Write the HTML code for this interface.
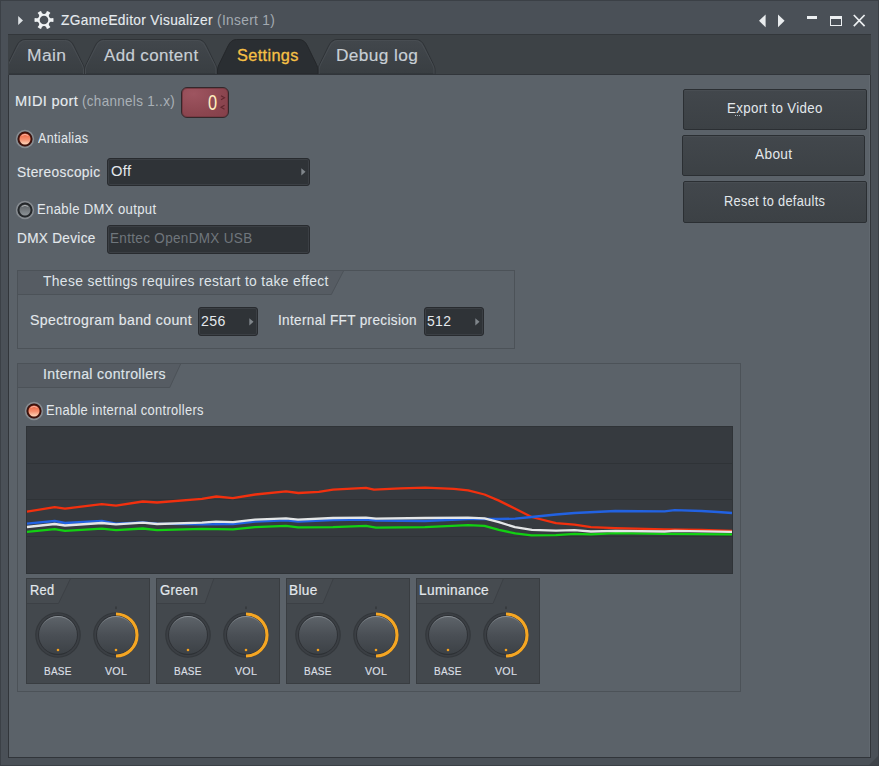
<!DOCTYPE html><html><head><meta charset="utf-8"><style>
html,body{margin:0;padding:0;width:879px;height:766px;overflow:hidden;background:#4a5057;}
.b{position:absolute;}
.t{position:absolute;white-space:nowrap;line-height:1;font-family:"Liberation Sans",sans-serif;transform-origin:0 0;}
svg{overflow:visible}
</style></head><body>
<div class="b" style="left:0px;top:0px;width:879px;height:766px;background:#4a5057;"></div>
<div class="b" style="left:0px;top:0px;width:879px;height:1px;background:#3b4046;"></div>
<div class="b" style="left:0px;top:0px;width:1px;height:766px;background:#3b4046;"></div>
<div class="b" style="left:878px;top:0px;width:1px;height:766px;background:#3b4046;"></div>
<div class="b" style="left:0px;top:765px;width:879px;height:1px;background:#3b4046;"></div>
<svg class="b" style="left:869px;top:756px" width="9" height="9"><path d="M9 0 L9 9 L0 9 Z" fill="#3f444a"/></svg>
<svg class="b" style="left:17px;top:15px" width="8" height="11"><path d="M1.2 1 L6 5.5 L1.2 10 Z" fill="#dde1e4"/></svg>
<svg class="b" style="left:33.6px;top:10.4px" width="20" height="20" viewBox="-10 -10 20 20"><path d="M9.50 0.00 L9.50 0.17 L9.49 0.33 L9.49 0.50 L9.48 0.66 L9.46 0.83 L9.45 0.99 L9.43 1.16 L9.41 1.32 L9.38 1.49 L9.36 1.65 L9.33 1.81 L9.29 1.98 L7.37 1.70 L6.98 1.74 L6.73 1.80 L6.52 1.87 L6.35 1.94 L6.21 2.02 L6.08 2.09 L5.96 2.17 L5.85 2.25 L5.76 2.33 L5.67 2.41 L5.58 2.49 L5.51 2.57 L5.44 2.65 L5.37 2.74 L5.31 2.82 L5.25 2.91 L5.20 3.00 L5.15 3.09 L5.10 3.19 L5.06 3.28 L5.02 3.38 L4.98 3.49 L4.95 3.59 L4.92 3.71 L4.89 3.82 L4.87 3.95 L4.86 4.08 L4.85 4.22 L4.85 4.37 L4.86 4.53 L4.88 4.71 L4.92 4.92 L5.00 5.18 L5.16 5.53 L6.36 7.06 L6.23 7.17 L6.11 7.28 L5.98 7.38 L5.85 7.49 L5.72 7.59 L5.58 7.69 L5.45 7.78 L5.31 7.88 L5.17 7.97 L5.03 8.06 L4.89 8.14 L4.75 8.23 L4.61 8.31 L4.46 8.39 L4.31 8.46 L4.16 8.54 L4.01 8.61 L3.86 8.68 L3.71 8.74 L3.56 8.81 L3.40 8.87 L3.25 8.93 L3.09 8.98 L2.94 9.04 L2.21 7.23 L1.98 6.92 L1.80 6.73 L1.64 6.58 L1.49 6.47 L1.36 6.38 L1.23 6.31 L1.10 6.24 L0.98 6.19 L0.86 6.15 L0.75 6.11 L0.64 6.08 L0.53 6.05 L0.42 6.03 L0.32 6.02 L0.21 6.01 L0.10 6.00 L0.00 6.00 L-0.10 6.00 L-0.21 6.01 L-0.32 6.02 L-0.42 6.03 L-0.53 6.05 L-0.64 6.08 L-0.75 6.11 L-0.86 6.15 L-0.98 6.19 L-1.10 6.24 L-1.23 6.31 L-1.36 6.38 L-1.49 6.47 L-1.64 6.58 L-1.80 6.73 L-1.98 6.92 L-2.21 7.23 L-2.94 9.04 L-3.09 8.98 L-3.25 8.93 L-3.40 8.87 L-3.56 8.81 L-3.71 8.74 L-3.86 8.68 L-4.01 8.61 L-4.16 8.54 L-4.31 8.46 L-4.46 8.39 L-4.61 8.31 L-4.75 8.23 L-4.89 8.14 L-5.03 8.06 L-5.17 7.97 L-5.31 7.88 L-5.45 7.78 L-5.58 7.69 L-5.72 7.59 L-5.85 7.49 L-5.98 7.38 L-6.11 7.28 L-6.23 7.17 L-6.36 7.06 L-5.16 5.53 L-5.00 5.18 L-4.92 4.92 L-4.88 4.71 L-4.86 4.53 L-4.85 4.37 L-4.85 4.22 L-4.86 4.08 L-4.87 3.95 L-4.89 3.82 L-4.92 3.71 L-4.95 3.59 L-4.98 3.49 L-5.02 3.38 L-5.06 3.28 L-5.10 3.19 L-5.15 3.09 L-5.20 3.00 L-5.25 2.91 L-5.31 2.82 L-5.37 2.74 L-5.44 2.65 L-5.51 2.57 L-5.58 2.49 L-5.67 2.41 L-5.76 2.33 L-5.85 2.25 L-5.96 2.17 L-6.08 2.09 L-6.21 2.02 L-6.35 1.94 L-6.52 1.87 L-6.73 1.80 L-6.98 1.74 L-7.37 1.70 L-9.29 1.98 L-9.33 1.81 L-9.36 1.65 L-9.38 1.49 L-9.41 1.32 L-9.43 1.16 L-9.45 0.99 L-9.46 0.83 L-9.48 0.66 L-9.49 0.50 L-9.49 0.33 L-9.50 0.17 L-9.50 0.00 L-9.50 -0.17 L-9.49 -0.33 L-9.49 -0.50 L-9.48 -0.66 L-9.46 -0.83 L-9.45 -0.99 L-9.43 -1.16 L-9.41 -1.32 L-9.38 -1.49 L-9.36 -1.65 L-9.33 -1.81 L-9.29 -1.98 L-7.37 -1.70 L-6.98 -1.74 L-6.73 -1.80 L-6.52 -1.87 L-6.35 -1.94 L-6.21 -2.02 L-6.08 -2.09 L-5.96 -2.17 L-5.85 -2.25 L-5.76 -2.33 L-5.67 -2.41 L-5.58 -2.49 L-5.51 -2.57 L-5.44 -2.65 L-5.37 -2.74 L-5.31 -2.82 L-5.25 -2.91 L-5.20 -3.00 L-5.15 -3.09 L-5.10 -3.19 L-5.06 -3.28 L-5.02 -3.38 L-4.98 -3.49 L-4.95 -3.59 L-4.92 -3.71 L-4.89 -3.82 L-4.87 -3.95 L-4.86 -4.08 L-4.85 -4.22 L-4.85 -4.37 L-4.86 -4.53 L-4.88 -4.71 L-4.92 -4.92 L-5.00 -5.18 L-5.16 -5.53 L-6.36 -7.06 L-6.23 -7.17 L-6.11 -7.28 L-5.98 -7.38 L-5.85 -7.49 L-5.72 -7.59 L-5.58 -7.69 L-5.45 -7.78 L-5.31 -7.88 L-5.17 -7.97 L-5.03 -8.06 L-4.89 -8.14 L-4.75 -8.23 L-4.61 -8.31 L-4.46 -8.39 L-4.31 -8.46 L-4.16 -8.54 L-4.01 -8.61 L-3.86 -8.68 L-3.71 -8.74 L-3.56 -8.81 L-3.40 -8.87 L-3.25 -8.93 L-3.09 -8.98 L-2.94 -9.04 L-2.21 -7.23 L-1.98 -6.92 L-1.80 -6.73 L-1.64 -6.58 L-1.49 -6.47 L-1.36 -6.38 L-1.23 -6.31 L-1.10 -6.24 L-0.98 -6.19 L-0.86 -6.15 L-0.75 -6.11 L-0.64 -6.08 L-0.53 -6.05 L-0.42 -6.03 L-0.32 -6.02 L-0.21 -6.01 L-0.10 -6.00 L-0.00 -6.00 L0.10 -6.00 L0.21 -6.01 L0.32 -6.02 L0.42 -6.03 L0.53 -6.05 L0.64 -6.08 L0.75 -6.11 L0.86 -6.15 L0.98 -6.19 L1.10 -6.24 L1.23 -6.31 L1.36 -6.38 L1.49 -6.47 L1.64 -6.58 L1.80 -6.73 L1.98 -6.92 L2.21 -7.23 L2.94 -9.04 L3.09 -8.98 L3.25 -8.93 L3.40 -8.87 L3.56 -8.81 L3.71 -8.74 L3.86 -8.68 L4.01 -8.61 L4.16 -8.54 L4.31 -8.46 L4.46 -8.39 L4.61 -8.31 L4.75 -8.23 L4.89 -8.14 L5.03 -8.06 L5.17 -7.97 L5.31 -7.88 L5.45 -7.78 L5.58 -7.69 L5.72 -7.59 L5.85 -7.49 L5.98 -7.38 L6.11 -7.28 L6.23 -7.17 L6.36 -7.06 L5.16 -5.53 L5.00 -5.18 L4.92 -4.92 L4.88 -4.71 L4.86 -4.53 L4.85 -4.37 L4.85 -4.22 L4.86 -4.08 L4.87 -3.95 L4.89 -3.82 L4.92 -3.71 L4.95 -3.59 L4.98 -3.49 L5.02 -3.38 L5.06 -3.28 L5.10 -3.19 L5.15 -3.09 L5.20 -3.00 L5.25 -2.91 L5.31 -2.82 L5.37 -2.74 L5.44 -2.65 L5.51 -2.57 L5.58 -2.49 L5.67 -2.41 L5.76 -2.33 L5.85 -2.25 L5.96 -2.17 L6.08 -2.09 L6.21 -2.02 L6.35 -1.94 L6.52 -1.87 L6.73 -1.80 L6.98 -1.74 L7.37 -1.70 L9.29 -1.98 L9.33 -1.81 L9.36 -1.65 L9.38 -1.49 L9.41 -1.32 L9.43 -1.16 L9.45 -0.99 L9.46 -0.83 L9.48 -0.66 L9.49 -0.50 L9.49 -0.33 L9.50 -0.17 Z M4.3 0 A4.3 4.3 0 1 0 -4.3 0 A4.3 4.3 0 1 0 4.3 0 Z" fill="#eef1f3" fill-rule="evenodd"/></svg>
<div class="t" style="left:60.80px;top:12.56px;font-size:14.5px;color:#e6ebef;-webkit-text-stroke:0.12px #e6ebef;letter-spacing:0.35px;transform:scaleX(0.9458);">ZGameEditor Visualizer <span style="color:#a3aab1;-webkit-text-stroke:0">(Insert 1)</span></div>
<svg class="b" style="left:758px;top:14px" width="9" height="14"><path d="M7.6 0.5 L1 6.8 L7.6 13.2 Z" fill="#e9ecee"/></svg>
<svg class="b" style="left:777px;top:14px" width="9" height="14"><path d="M1 0.5 L7.6 6.8 L1 13.2 Z" fill="#e9ecee"/></svg>
<div class="b" style="left:807px;top:16px;width:9.5px;height:3px;background:#eceff1;"></div>
<div class="b" style="left:829.5px;top:15.5px;width:12.5px;height:10px;border:1.4px solid #eceff1;border-top-width:3px;box-sizing:border-box;"></div>
<svg class="b" style="left:852px;top:14px" width="14" height="13"><path d="M1.8 1 L12.6 12.2 M12.6 1 L1.8 12.2" stroke="#eceff1" stroke-width="1.7"/></svg>
<div class="b" style="left:8px;top:34px;width:863px;height:41px;background:#3d4246;border-top:1px solid #33373b;box-sizing:border-box;"></div>
<svg width="0" height="0" style="position:absolute"><defs><linearGradient id="tgi" x1="0" y1="0" x2="0" y2="1"><stop offset="0" stop-color="#42474c"/><stop offset="1" stop-color="#393e42"/></linearGradient><clipPath id="barclip"><rect x="9" y="34" width="861" height="41"/></clipPath></defs></svg>
<svg class="b" style="left:0;top:0" width="879" height="80"><g clip-path="url(#barclip)"><path d="M6.0 74 L6.0 70 C6.0 68 6.5 67 7.5 64.5 L16.5 46.0 Q19.5 39.5 25.0 39.5 L65.5 39.5 Q71.0 39.5 74.0 46.0 L83.0 64.5 C84.0 67 84.5 68 84.5 70 L84.5 74 Z" fill="url(#tgi)" stroke="#2f3337" stroke-width="1"/><path d="M7 74 L7 70 C7 68 7.5 67 8.5 64.5 L17.5 47.0 Q20.5 40.5 26 40.5 L64.5 40.5 Q70.0 40.5 73.0 47.0 L82.0 64.5 C83.0 67 83.5 68 83.5 70 L83.5 74" fill="none" stroke="#4a4f54" stroke-width="0.8"/><path d="M84.5 74 L84.5 70 C84.5 68 85.0 67 86.0 64.5 L95.0 46.0 Q98.0 39.5 103.5 39.5 L198.0 39.5 Q203.5 39.5 206.5 46.0 L215.5 64.5 C216.5 67 217.0 68 217.0 70 L217.0 74 Z" fill="url(#tgi)" stroke="#2f3337" stroke-width="1"/><path d="M85.5 74 L85.5 70 C85.5 68 86.0 67 87.0 64.5 L96.0 47.0 Q99.0 40.5 104.5 40.5 L197 40.5 Q202.5 40.5 205.5 47.0 L214.5 64.5 C215.5 67 216 68 216 70 L216 74" fill="none" stroke="#4a4f54" stroke-width="0.8"/><path d="M318.0 74 L318.0 70 C318.0 68 318.5 67 319.5 64.5 L328.5 46.0 Q331.5 39.5 337.0 39.5 L416.0 39.5 Q421.5 39.5 424.5 46.0 L433.5 64.5 C434.5 67 435.0 68 435.0 70 L435.0 74 Z" fill="url(#tgi)" stroke="#2f3337" stroke-width="1"/><path d="M319 74 L319 70 C319 68 319.5 67 320.5 64.5 L329.5 47.0 Q332.5 40.5 338 40.5 L415 40.5 Q420.5 40.5 423.5 47.0 L432.5 64.5 C433.5 67 434 68 434 70 L434 74" fill="none" stroke="#4a4f54" stroke-width="0.8"/><path d="M217.5 74 L217.5 70 C217.5 68 218.0 67 219.0 64.5 L228.0 46.0 Q231.0 39.5 236.5 39.5 L299.0 39.5 Q304.5 39.5 307.5 46.0 L316.5 64.5 C317.5 67 318.0 68 318.0 70 L318.0 74 Z" fill="#2a2e32" stroke="#24272a" stroke-width="1"/></g></svg>
<div class="t" style="left:26.96px;top:47.56px;font-size:16px;color:#c8cfd5;-webkit-text-stroke:0.15px #c8cfd5;letter-spacing:0.35px;transform:scaleX(1.0926);">Main</div>
<div class="t" style="left:104.20px;top:47.56px;font-size:16px;color:#c8cfd5;-webkit-text-stroke:0.15px #c8cfd5;letter-spacing:0.35px;transform:scaleX(1.0584);">Add content</div>
<div class="t" style="left:335.62px;top:47.56px;font-size:16px;color:#c8cfd5;-webkit-text-stroke:0.15px #c8cfd5;letter-spacing:0.35px;transform:scaleX(1.0797);">Debug log</div>
<div class="t" style="left:236.90px;top:47.56px;font-size:16px;color:#f6c046;-webkit-text-stroke:0.3px #f6c046;letter-spacing:0.35px;transform:scaleX(1.0183);">Settings</div>
<div class="b" style="left:9px;top:74px;width:861px;height:1px;background:#31353a;"></div>
<div class="b" style="left:8px;top:75px;width:863px;height:683px;background:#5b6269;border-left:1px solid #31353a;border-bottom:1px solid #31353a;border-right:1px solid #31353a;box-sizing:border-box;"></div>
<div class="b" style="left:869px;top:75px;width:1px;height:682px;background:#626970;"></div>
<div class="t" style="left:14.59px;top:93.81px;font-size:14.5px;color:#e6ebef;-webkit-text-stroke:0.12px #e6ebef;letter-spacing:0.35px;transform:scaleX(1.0065);">MIDI port</div>
<div class="t" style="left:81.67px;top:93.81px;font-size:14.5px;color:#aab1b7;letter-spacing:0.35px;transform:scaleX(0.9265);">(channels 1..x)</div>
<div class="b" style="left:181px;top:87px;width:48px;height:31px;background:radial-gradient(ellipse at 25% 20%,#9e5560,#8c4650 60%,#84404a);border:1px solid #34282b;border-radius:6px;box-sizing:border-box;box-shadow:inset 0 0 0 1px #7a3a43;"></div>
<div class="t" style="left:208.04px;top:92.56px;font-size:21.5px;color:#fff0c0;transform:scaleX(0.7600);">0</div>
<svg class="b" style="left:220px;top:95px" width="6" height="15"><path d="M1 0.8 L4.5 2.8 L1 4.8 M4.5 10.2 L1 12.2 L4.5 14.2" stroke="#60282f" stroke-width="1.1" fill="none"/></svg>
<svg class="b" style="left:15.100000000000001px;top:129px" width="20" height="20" viewBox="-10 -10 20 20"><defs><linearGradient id="rg25_139" x1="0" y1="0" x2="0" y2="1"><stop offset="0" stop-color="#ec6240"/><stop offset="0.55" stop-color="#f59070"/><stop offset="1" stop-color="#ffd8bc"/></linearGradient></defs><circle r="8.35" fill="none" stroke="#868b90" stroke-width="1.7"/><circle r="7.5" fill="#3e120c"/><circle r="5.8" fill="#5a2014"/><circle r="5.5" fill="url(#rg25_139)"/><path d="M-3.2 -3.6 Q0 -5.6 3.2 -3.6" stroke="#ffffff" stroke-opacity="0.55" stroke-width="0.9" fill="none"/></svg>
<div class="t" style="left:37.60px;top:131.06px;font-size:14px;color:#e3e8ec;letter-spacing:0.35px;transform:scaleX(0.8964);">Antialias</div>
<div class="t" style="left:17.05px;top:164.56px;font-size:14.5px;color:#e3e8ec;-webkit-text-stroke:0.12px #e3e8ec;letter-spacing:0.35px;transform:scaleX(0.9477);">Stereoscopic</div>
<div class="b" style="left:107px;top:158px;width:203px;height:28px;background:#2f3337;border:1px solid #282b2f;border-radius:3px;box-sizing:border-box;box-shadow:inset 0 0 0 1px #3b3f44;"></div>
<svg class="b" style="left:300.8px;top:168.2px" width="6" height="8"><path d="M0.3 0.2 L4.5 3.8 L0.3 7.4 Z" fill="#80868b"/></svg>
<div class="t" style="left:111.30px;top:164.44px;font-size:14px;color:#e3e8ec;letter-spacing:0.35px;transform:scaleX(1.0526);">Off</div>
<svg class="b" style="left:14.899999999999999px;top:199.9px" width="20" height="20" viewBox="-10 -10 20 20"><defs><linearGradient id="rg24_209" x1="0" y1="0" x2="0" y2="1"><stop offset="0" stop-color="#5a5f63"/><stop offset="1" stop-color="#8c9296"/></linearGradient></defs><circle r="8.35" fill="none" stroke="#868b90" stroke-width="1.7"/><circle r="7.5" fill="#24272a"/><circle r="5.8" fill="#2c2f32"/><circle r="5.5" fill="url(#rg24_209)"/><path d="M-3.2 -3.6 Q0 -5.6 3.2 -3.6" stroke="#ffffff" stroke-opacity="0.55" stroke-width="0.9" fill="none"/></svg>
<div class="t" style="left:36.56px;top:202.06px;font-size:14px;color:#e3e8ec;letter-spacing:0.35px;transform:scaleX(0.9373);">Enable DMX output</div>
<div class="t" style="left:17.06px;top:231.06px;font-size:14.5px;color:#e3e8ec;-webkit-text-stroke:0.12px #e3e8ec;letter-spacing:0.35px;transform:scaleX(0.9361);">DMX Device</div>
<div class="b" style="left:107px;top:225px;width:203px;height:29px;background:#2f3337;border:1px solid #282b2f;border-radius:3px;box-sizing:border-box;box-shadow:inset 0 0 0 1px #3b3f44;"></div>
<div class="t" style="left:110.34px;top:231.31px;font-size:14px;color:#6f767c;letter-spacing:0.35px;transform:scaleX(0.9637);">Enttec OpenDMX USB</div>
<div class="b" style="left:683px;top:89px;width:184px;height:41px;background:linear-gradient(#42474c,#3c4145);border:1px solid #2b2f33;border-radius:2px;box-sizing:border-box;box-shadow:inset 0 1px 0 #484d52;"></div>
<div class="t" style="left:727.25px;top:101.44px;font-size:14px;color:#e3e8ec;letter-spacing:0.35px;transform:scaleX(0.9495);">Export to Video</div>
<div class="b" style="left:735px;top:115px;width:1px;height:1px;background:#aeb8c2;"></div>
<div class="b" style="left:737px;top:115px;width:1px;height:1px;background:#aeb8c2;"></div>
<div class="b" style="left:739px;top:115px;width:1px;height:1px;background:#aeb8c2;"></div>
<div class="b" style="left:682px;top:135px;width:183px;height:41px;background:linear-gradient(#42474c,#3c4145);border:1px solid #2b2f33;border-radius:2px;box-sizing:border-box;box-shadow:inset 0 1px 0 #484d52;"></div>
<div class="t" style="left:754.90px;top:147.06px;font-size:14px;color:#e3e8ec;letter-spacing:0.35px;transform:scaleX(0.9763);">About</div>
<div class="b" style="left:683px;top:181px;width:184px;height:42px;background:linear-gradient(#42474c,#3c4145);border:1px solid #2b2f33;border-radius:2px;box-sizing:border-box;box-shadow:inset 0 1px 0 #484d52;"></div>
<div class="t" style="left:723.79px;top:194.19px;font-size:14px;color:#e3e8ec;letter-spacing:0.35px;transform:scaleX(0.9118);">Reset to defaults</div>
<div class="b" style="left:17px;top:270px;width:498px;height:79px;border:1px solid #4c5258;box-sizing:border-box;"></div>
<svg class="b" style="left:18px;top:271px" width="328.5" height="25"><path d="M0 0 L325.5 0 L313.3 24 L0 24 Z" fill="#565c63"/><path d="M0 23.5 L313.3 23.5 L325.5 0" stroke="#4c5258" fill="none"/></svg>
<div class="t" style="left:43.20px;top:273.94px;font-size:14px;color:#dfe4e9;letter-spacing:0.35px;transform:scaleX(0.9889);">These settings requires restart to take effect</div>
<div class="t" style="left:29.73px;top:313.19px;font-size:14.5px;color:#e3e8ec;-webkit-text-stroke:0.12px #e3e8ec;letter-spacing:0.35px;transform:scaleX(0.9733);">Spectrogram band count</div>
<div class="b" style="left:198px;top:307px;width:60px;height:29px;background:#2f3337;border:1px solid #282b2f;border-radius:3px;box-sizing:border-box;box-shadow:inset 0 0 0 1px #3b3f44;"></div>
<svg class="b" style="left:248.8px;top:317.7px" width="6" height="8"><path d="M0.3 0.2 L4.5 3.8 L0.3 7.4 Z" fill="#80868b"/></svg>
<div class="t" style="left:200.99px;top:313.81px;font-size:14px;color:#e3e8ec;letter-spacing:0.35px;transform:scaleX(1.0087);">256</div>
<div class="t" style="left:278.46px;top:313.19px;font-size:14.5px;color:#e3e8ec;-webkit-text-stroke:0.12px #e3e8ec;letter-spacing:0.35px;transform:scaleX(0.9361);">Internal FFT precision</div>
<div class="b" style="left:424px;top:307px;width:60px;height:29px;background:#2f3337;border:1px solid #282b2f;border-radius:3px;box-sizing:border-box;box-shadow:inset 0 0 0 1px #3b3f44;"></div>
<svg class="b" style="left:474.8px;top:317.7px" width="6" height="8"><path d="M0.3 0.2 L4.5 3.8 L0.3 7.4 Z" fill="#80868b"/></svg>
<div class="t" style="left:427.20px;top:313.81px;font-size:14px;color:#e3e8ec;letter-spacing:0.35px;transform:scaleX(0.9957);">512</div>
<div class="b" style="left:17px;top:363px;width:724px;height:329px;border:1px solid #4c5258;box-sizing:border-box;"></div>
<svg class="b" style="left:18px;top:364px" width="165.6" height="25"><path d="M0 0 L162.6 0 L151.7 24 L0 24 Z" fill="#565c63"/><path d="M0 23.5 L151.7 23.5 L162.6 0" stroke="#4c5258" fill="none"/></svg>
<div class="t" style="left:42.69px;top:367.19px;font-size:14px;color:#dfe4e9;-webkit-text-stroke:0.15px #dfe4e9;letter-spacing:0.35px;transform:scaleX(1.0066);">Internal controllers</div>
<svg class="b" style="left:23.9px;top:400.7px" width="20" height="20" viewBox="-10 -10 20 20"><defs><linearGradient id="rg33_410" x1="0" y1="0" x2="0" y2="1"><stop offset="0" stop-color="#ec6240"/><stop offset="0.55" stop-color="#f59070"/><stop offset="1" stop-color="#ffd8bc"/></linearGradient></defs><circle r="8.35" fill="none" stroke="#868b90" stroke-width="1.7"/><circle r="7.5" fill="#3e120c"/><circle r="5.8" fill="#5a2014"/><circle r="5.5" fill="url(#rg33_410)"/><path d="M-3.2 -3.6 Q0 -5.6 3.2 -3.6" stroke="#ffffff" stroke-opacity="0.55" stroke-width="0.9" fill="none"/></svg>
<div class="t" style="left:45.68px;top:403.19px;font-size:14px;color:#e3e8ec;letter-spacing:0.35px;transform:scaleX(0.9212);">Enable internal controllers</div>
<div class="b" style="left:26px;top:426px;width:707px;height:148px;background:#363a3f;border:1px solid #2f3337;box-sizing:border-box;"></div>
<div class="b" style="left:27px;top:463px;width:705px;height:1px;background:#2f3337;"></div>
<div class="b" style="left:27px;top:499px;width:705px;height:1px;background:#2f3337;"></div>
<div class="b" style="left:27px;top:536px;width:705px;height:1px;background:#2f3337;"></div>
<svg class="b" style="left:26px;top:426px" width="707" height="148"><polyline points="1.0,105.8 28.7,103.1 39.0,104.8 75.8,102.7 90.0,104.2 116.8,102.5 131.0,104.2 176.0,102.8 207.0,103.3 229.0,101.2 260.0,99.8 272.0,101.4 307.0,101.2 340.0,99.8 350.0,101.6 399.0,101.2 442.0,99.2 458.5,99.8 472.9,103.9 489.3,107.4 505.6,109.4 530.0,109.2 548.5,107.9 564.9,108.3 589.4,107.1 638.6,107.9 706.0,108.3" fill="none" stroke="#12d012" stroke-width="2.3" stroke-linejoin="round"/><polyline points="1.0,85.7 28.7,81.2 39.0,82.7 75.8,78.2 90.0,79.6 116.8,75.5 131.0,76.5 176.0,72.8 190.4,70.5 206.8,72.1 229.3,68.5 260.0,65.4 272.3,67.0 292.8,65.8 307.0,63.7 339.9,61.9 348.0,63.7 374.6,62.3 399.2,61.7 427.8,62.9 442.2,64.4 458.5,68.5 472.9,74.6 489.3,82.8 505.6,91.0 530.0,97.1 548.5,98.7 564.9,101.2 589.4,102.2 638.6,103.4 675.5,103.8 706.0,104.8" fill="none" stroke="#f2300e" stroke-width="2.3" stroke-linejoin="round"/><polyline points="1.0,97.6 28.7,95.0 39.0,97.0 75.8,95.0 90.0,97.6 116.8,96.4 131.0,97.6 176.0,98.4 207.0,98.0 229.0,95.6 260.0,94.4 272.0,95.6 307.0,94.0 340.0,93.6 350.0,94.5 399.0,95.0 442.0,93.0 472.9,93.0 489.3,92.6 505.6,91.0 530.0,88.5 548.5,87.0 589.4,85.0 638.6,85.4 648.8,84.2 675.5,85.0 691.8,86.0 706.0,87.0" fill="none" stroke="#2262e2" stroke-width="2.3" stroke-linejoin="round"/><polyline points="1.0,101.0 28.7,98.0 39.0,99.5 75.8,97.0 90.0,98.4 116.8,96.6 131.0,98.0 176.0,96.7 190.0,95.7 207.0,96.1 229.0,93.6 260.0,92.4 272.0,93.6 307.0,92.0 340.0,91.6 350.0,92.6 399.0,92.0 442.0,91.6 458.5,92.4 472.9,96.1 489.0,101.2 506.0,103.9 530.0,104.7 548.5,104.2 564.9,105.5 589.4,104.8 638.6,105.5 648.8,104.8 706.0,105.9" fill="none" stroke="#e4e6e7" stroke-width="2.3" stroke-linejoin="round"/></svg>
<svg width="0" height="0" style="position:absolute"><defs><linearGradient id="kg" x1="0" y1="0" x2="0" y2="1"><stop offset="0" stop-color="#5e646a"/><stop offset="0.5" stop-color="#4a4f55"/><stop offset="1" stop-color="#3c4146"/></linearGradient><linearGradient id="kr" x1="0" y1="0" x2="0" y2="1"><stop offset="0" stop-color="#8a9096"/><stop offset="0.3" stop-color="#5a6066" stop-opacity="0.4"/><stop offset="0.6" stop-color="#3a3f44" stop-opacity="0"/></linearGradient></defs></svg>
<div class="b" style="left:26px;top:578px;width:124px;height:106px;background:#43484d;border:1px solid #393d41;box-sizing:border-box;"></div>
<svg class="b" style="left:27px;top:579px" width="46.3" height="26"><path d="M0 0 L43.3 0 L31.5 25 L0 25 Z" fill="#464b50"/><path d="M0 24.5 L31.5 24.5 L43.3 0" stroke="#3c4045" fill="none"/></svg>
<div class="t" style="left:29.52px;top:582.56px;font-size:14.5px;color:#e3e8ec;-webkit-text-stroke:0.2px #e3e8ec;letter-spacing:0.35px;transform:scaleX(0.8846);">Red</div>
<svg class="b" style="left:32px;top:608.9px" width="52" height="52" viewBox="-26 -26 52 52"><circle r="22.8" fill="#33373b"/><circle r="21.7" fill="#3b3f44"/><circle r="19.9" fill="#2d3034"/><circle r="19.0" fill="url(#kg)"/><circle r="18.5" fill="none" stroke="url(#kr)" stroke-width="1"/><circle cx="0" cy="15" r="1.3" fill="#f5a21f"/></svg>
<svg class="b" style="left:90px;top:609.2px" width="52" height="52" viewBox="-26 -26 52 52"><circle r="22.8" fill="#33373b"/><circle r="21.7" fill="#3b3f44"/><circle r="19.9" fill="#2d3034"/><path d="M0 -21.0 A21.0 21.0 0 0 1 0 21.0" fill="none" stroke="#f5a623" stroke-width="3.2"/><rect x="-0.5" y="-28.5" width="1" height="2.6" fill="#2c2f33"/><circle r="19.0" fill="url(#kg)"/><circle r="18.5" fill="none" stroke="url(#kr)" stroke-width="1"/><circle cx="0" cy="15" r="1.3" fill="#f5a21f"/></svg>
<div class="t" style="left:44.33px;top:665.56px;font-size:11.5px;color:#d9dee3;-webkit-text-stroke:0.2px #d9dee3;letter-spacing:0.3px;transform:scaleX(0.8677);">BASE</div>
<div class="t" style="left:104.90px;top:665.56px;font-size:11.5px;color:#d9dee3;-webkit-text-stroke:0.2px #d9dee3;letter-spacing:0.3px;transform:scaleX(0.9250);">VOL</div>
<div class="b" style="left:156px;top:578px;width:124px;height:106px;background:#43484d;border:1px solid #393d41;box-sizing:border-box;"></div>
<svg class="b" style="left:157px;top:579px" width="59.69999999999999" height="26"><path d="M0 0 L56.69999999999999 0 L47.900000000000006 25 L0 25 Z" fill="#464b50"/><path d="M0 24.5 L47.900000000000006 24.5 L56.69999999999999 0" stroke="#3c4045" fill="none"/></svg>
<div class="t" style="left:160.40px;top:582.56px;font-size:14.5px;color:#e3e8ec;-webkit-text-stroke:0.2px #e3e8ec;letter-spacing:0.35px;transform:scaleX(0.9049);">Green</div>
<svg class="b" style="left:162px;top:608.9px" width="52" height="52" viewBox="-26 -26 52 52"><circle r="22.8" fill="#33373b"/><circle r="21.7" fill="#3b3f44"/><circle r="19.9" fill="#2d3034"/><circle r="19.0" fill="url(#kg)"/><circle r="18.5" fill="none" stroke="url(#kr)" stroke-width="1"/><circle cx="0" cy="15" r="1.3" fill="#f5a21f"/></svg>
<svg class="b" style="left:220px;top:609.2px" width="52" height="52" viewBox="-26 -26 52 52"><circle r="22.8" fill="#33373b"/><circle r="21.7" fill="#3b3f44"/><circle r="19.9" fill="#2d3034"/><path d="M0 -21.0 A21.0 21.0 0 0 1 0 21.0" fill="none" stroke="#f5a623" stroke-width="3.2"/><rect x="-0.5" y="-28.5" width="1" height="2.6" fill="#2c2f33"/><circle r="19.0" fill="url(#kg)"/><circle r="18.5" fill="none" stroke="url(#kr)" stroke-width="1"/><circle cx="0" cy="15" r="1.3" fill="#f5a21f"/></svg>
<div class="t" style="left:174.33px;top:665.56px;font-size:11.5px;color:#d9dee3;-webkit-text-stroke:0.2px #d9dee3;letter-spacing:0.3px;transform:scaleX(0.8677);">BASE</div>
<div class="t" style="left:234.90px;top:665.56px;font-size:11.5px;color:#d9dee3;-webkit-text-stroke:0.2px #d9dee3;letter-spacing:0.3px;transform:scaleX(0.9250);">VOL</div>
<div class="b" style="left:286px;top:578px;width:124px;height:106px;background:#43484d;border:1px solid #393d41;box-sizing:border-box;"></div>
<svg class="b" style="left:287px;top:579px" width="49.19999999999999" height="26"><path d="M0 0 L46.19999999999999 0 L35.89999999999998 25 L0 25 Z" fill="#464b50"/><path d="M0 24.5 L35.89999999999998 24.5 L46.19999999999999 0" stroke="#3c4045" fill="none"/></svg>
<div class="t" style="left:289.46px;top:582.56px;font-size:14.5px;color:#e3e8ec;-webkit-text-stroke:0.2px #e3e8ec;letter-spacing:0.35px;transform:scaleX(0.9379);">Blue</div>
<svg class="b" style="left:292px;top:608.9px" width="52" height="52" viewBox="-26 -26 52 52"><circle r="22.8" fill="#33373b"/><circle r="21.7" fill="#3b3f44"/><circle r="19.9" fill="#2d3034"/><circle r="19.0" fill="url(#kg)"/><circle r="18.5" fill="none" stroke="url(#kr)" stroke-width="1"/><circle cx="0" cy="15" r="1.3" fill="#f5a21f"/></svg>
<svg class="b" style="left:350px;top:609.2px" width="52" height="52" viewBox="-26 -26 52 52"><circle r="22.8" fill="#33373b"/><circle r="21.7" fill="#3b3f44"/><circle r="19.9" fill="#2d3034"/><path d="M0 -21.0 A21.0 21.0 0 0 1 0 21.0" fill="none" stroke="#f5a623" stroke-width="3.2"/><rect x="-0.5" y="-28.5" width="1" height="2.6" fill="#2c2f33"/><circle r="19.0" fill="url(#kg)"/><circle r="18.5" fill="none" stroke="url(#kr)" stroke-width="1"/><circle cx="0" cy="15" r="1.3" fill="#f5a21f"/></svg>
<div class="t" style="left:304.33px;top:665.56px;font-size:11.5px;color:#d9dee3;-webkit-text-stroke:0.2px #d9dee3;letter-spacing:0.3px;transform:scaleX(0.8677);">BASE</div>
<div class="t" style="left:364.90px;top:665.56px;font-size:11.5px;color:#d9dee3;-webkit-text-stroke:0.2px #d9dee3;letter-spacing:0.3px;transform:scaleX(0.9250);">VOL</div>
<div class="b" style="left:416px;top:578px;width:124px;height:106px;background:#43484d;border:1px solid #393d41;box-sizing:border-box;"></div>
<svg class="b" style="left:417px;top:579px" width="89.30000000000001" height="26"><path d="M0 0 L86.30000000000001 0 L76 25 L0 25 Z" fill="#464b50"/><path d="M0 24.5 L76 24.5 L86.30000000000001 0" stroke="#3c4045" fill="none"/></svg>
<div class="t" style="left:419.45px;top:582.56px;font-size:14.5px;color:#e3e8ec;-webkit-text-stroke:0.2px #e3e8ec;letter-spacing:0.35px;transform:scaleX(0.9452);">Luminance</div>
<svg class="b" style="left:422px;top:608.9px" width="52" height="52" viewBox="-26 -26 52 52"><circle r="22.8" fill="#33373b"/><circle r="21.7" fill="#3b3f44"/><circle r="19.9" fill="#2d3034"/><circle r="19.0" fill="url(#kg)"/><circle r="18.5" fill="none" stroke="url(#kr)" stroke-width="1"/><circle cx="0" cy="15" r="1.3" fill="#f5a21f"/></svg>
<svg class="b" style="left:480px;top:609.2px" width="52" height="52" viewBox="-26 -26 52 52"><circle r="22.8" fill="#33373b"/><circle r="21.7" fill="#3b3f44"/><circle r="19.9" fill="#2d3034"/><path d="M0 -21.0 A21.0 21.0 0 0 1 0 21.0" fill="none" stroke="#f5a623" stroke-width="3.2"/><rect x="-0.5" y="-28.5" width="1" height="2.6" fill="#2c2f33"/><circle r="19.0" fill="url(#kg)"/><circle r="18.5" fill="none" stroke="url(#kr)" stroke-width="1"/><circle cx="0" cy="15" r="1.3" fill="#f5a21f"/></svg>
<div class="t" style="left:434.33px;top:665.56px;font-size:11.5px;color:#d9dee3;-webkit-text-stroke:0.2px #d9dee3;letter-spacing:0.3px;transform:scaleX(0.8677);">BASE</div>
<div class="t" style="left:494.90px;top:665.56px;font-size:11.5px;color:#d9dee3;-webkit-text-stroke:0.2px #d9dee3;letter-spacing:0.3px;transform:scaleX(0.9250);">VOL</div>
</body></html>
